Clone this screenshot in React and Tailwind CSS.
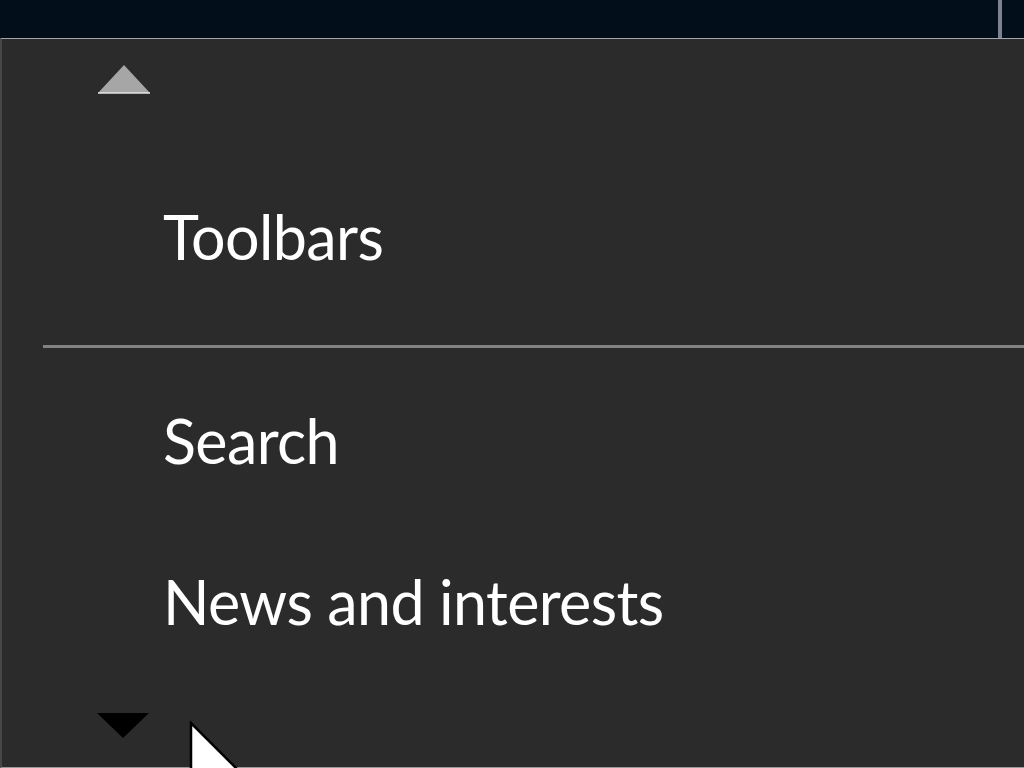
export default function App() {
  const font = { fontFamily: 'Lato, "Noto Sans", sans-serif' };
  return (
    <div className="w-[1024px] h-[768px] overflow-hidden flex flex-col bg-[#2b2b2b]">
      <div className="h-[38px] shrink-0 bg-[#020f1a] flex justify-end">
        <div className="w-[4px] h-full bg-[#7d8292] mr-[22px]" />
      </div>
      <div className="relative flex-1 flex flex-col bg-[#2b2b2b] border-t border-[#a3a7ab] border-l-2 border-l-[#474747] border-b border-b-[#9a9a9a]">
        <div className="mt-[25px] ml-[95px] h-[30px]">
          <svg width="54" height="30" viewBox="0 0 54 30">
            <polygon points="1,29 27,1 53,29" fill="#a6a6a6" />
            <line x1="1" y1="29" x2="53" y2="29" stroke="#e6e6e6" strokeWidth="1.5" />
          </svg>
        </div>
        <div
          className="mt-[103px] ml-[161px] h-[80px] leading-[80px] text-[61px] tracking-[-0.6px] text-white whitespace-nowrap"
          style={font}
        >
          Toolbars
        </div>
        <div className="mt-[68px] ml-[41px] h-[3px] bg-[#828282]" />
        <div
          className="mt-[53px] ml-[161px] h-[80px] leading-[80px] text-[61px] tracking-[-0.6px] text-white whitespace-nowrap"
          style={font}
        >
          Search
        </div>
        <div
          className="mt-[81px] ml-[161px] h-[80px] leading-[80px] text-[61px] tracking-[-0.6px] text-white whitespace-nowrap"
          style={font}
        >
          News and interests
        </div>
        <div className="mt-[71px] ml-[94px] h-[26px]">
          <svg width="54" height="26" viewBox="0 0 54 26">
            <polygon points="1,0 53,0 27,25" fill="#000000" />
          </svg>
        </div>
        <svg
          className="absolute left-[187px] top-[682px]"
          width="52"
          height="80"
          viewBox="0 0 52 80"
        >
          <polygon
            points="2,2 2,70 18,54 29,78 38,74 27,50 50,50"
            fill="#ffffff"
            stroke="#000000"
            strokeWidth="2.5"
            strokeLinejoin="miter"
          />
        </svg>
      </div>
    </div>
  );
}
